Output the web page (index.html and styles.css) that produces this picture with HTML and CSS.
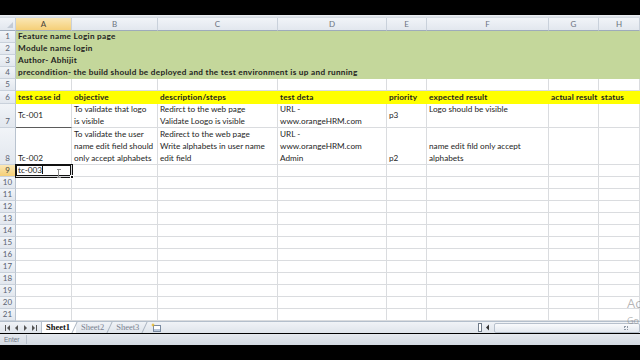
FILE: index.html
```html
<!DOCTYPE html>
<html lang="en">
<head>
	<meta charset="UTF-8">
	<title>Test cases - Login page</title>
	<link rel="stylesheet" href="styles.css">
</head>
<body>
	<div class="screen">
		<div class="topbar"></div>
		<div class="strip"></div>
		<table class="sheet">
			<colgroup>
				<col class="c-hdr"><col class="c-a"><col class="c-b"><col class="c-c"><col class="c-d">
				<col class="c-e"><col class="c-f"><col class="c-g"><col class="c-h">
			</colgroup>
			<tr class="colhdr">
				<th class="corner"><span class="tri"></span></th>
				<th class="active">A</th><th>B</th><th>C</th><th>D</th><th>E</th><th>F</th><th>G</th><th>H</th>
			</tr>
			<tr class="green">
				<th>1</th>
				<td colspan="8" class="b">Feature name Login page</td>
			</tr>
			<tr class="green">
				<th>2</th>
				<td colspan="8" class="b">Module name login</td>
			</tr>
			<tr class="green">
				<th>3</th>
				<td colspan="8" class="b">Author- Abhijit</td>
			</tr>
			<tr class="green">
				<th>4</th>
				<td colspan="8" class="b">precondition- the build should be deployed and the test environment is up and running</td>
			</tr>
			<tr>
				<th>5</th>
				<td></td><td></td><td></td><td></td><td></td><td></td><td></td><td></td>
			</tr>
			<tr class="yellow h13">
				<th>6</th>
				<td class="b">test case id</td>
				<td class="b">objective</td>
				<td class="b">description/steps</td>
				<td class="b">test deta</td>
				<td class="b">priority</td>
				<td class="b">expected result</td>
				<td class="b">actual result</td>
				<td class="b">status</td>
			</tr>
			<tr class="h24 wrap2">
				<th>7</th>
				<td class="mid underline">Tc-001</td>
				<td>To validate that logo<br>is visible</td>
				<td>Redirct to the web page<br>Validate Loogo is visible</td>
				<td>URL -<br>www.orangeHRM.com</td>
				<td class="mid">p3</td>
				<td class="top">Logo should be visible</td>
				<td></td><td></td>
			</tr>
			<tr class="h37 wrap3">
				<th>8</th>
				<td>Tc-002</td>
				<td>To validate the user<br>name edit field should<br>only accept alphabets</td>
				<td>Redirect to the web page<br>Write alphabets in user name<br>edit field</td>
				<td>URL -<br>www.orangeHRM.com<br>Admin</td>
				<td>p2</td>
				<td>name edit fild only accept<br>alphabets</td>
				<td></td><td></td>
			</tr>
			<tr>
				<th class="active">9</th>
				<td class="sel">tc-003<span class="caret"></span><span class="ibeam"></span><span class="handle"></span></td>
				<td></td><td></td><td></td><td></td><td></td><td></td><td></td>
			</tr>
			<tr><th>10</th><td></td><td></td><td></td><td></td><td></td><td></td><td></td><td></td></tr>
			<tr><th>11</th><td></td><td></td><td></td><td></td><td></td><td></td><td></td><td></td></tr>
			<tr><th>12</th><td></td><td></td><td></td><td></td><td></td><td></td><td></td><td></td></tr>
			<tr><th>13</th><td></td><td></td><td></td><td></td><td></td><td></td><td></td><td></td></tr>
			<tr><th>14</th><td></td><td></td><td></td><td></td><td></td><td></td><td></td><td></td></tr>
			<tr><th>15</th><td></td><td></td><td></td><td></td><td></td><td></td><td></td><td></td></tr>
			<tr><th>16</th><td></td><td></td><td></td><td></td><td></td><td></td><td></td><td></td></tr>
			<tr><th>17</th><td></td><td></td><td></td><td></td><td></td><td></td><td></td><td></td></tr>
			<tr><th>18</th><td></td><td></td><td></td><td></td><td></td><td></td><td></td><td></td></tr>
			<tr><th>19</th><td></td><td></td><td></td><td></td><td></td><td></td><td></td><td></td></tr>
			<tr><th>20</th><td></td><td></td><td></td><td></td><td></td><td></td><td></td><td></td></tr>
			<tr><th>21</th><td></td><td></td><td></td><td></td><td></td><td></td><td></td><td></td></tr>
		</table>
		<div class="tabbar">
			<div class="nav">
				<svg width="36" height="8" viewBox="0 0 36 8">
					<rect x="3" y="1" width="1" height="6" fill="#555"/>
					<polygon points="8,1 5,4 8,7" fill="#555"/>
					<polygon points="16,1 13,4 16,7" fill="#555"/>
					<polygon points="22,1 25,4 22,7" fill="#555"/>
					<polygon points="30,1 33,4 30,7" fill="#555"/>
					<rect x="34" y="1" width="1" height="6" fill="#555"/>
				</svg>
			</div>
			<div class="tabs">
				<span class="tab on">Sheet1</span>
				<span class="tab">Sheet2</span>
				<span class="tab">Sheet3</span>
				<span class="newsheet">
					<svg width="10" height="9" viewBox="0 0 10 9">
						<rect x="2.5" y="2.5" width="7" height="6" fill="#fff" stroke="#7a8aa0"/>
						<rect x="3" y="6" width="6" height="2" fill="#b9c7da"/>
						<path d="M2 0 L2.7 1.5 L4 2 L2.7 2.5 L2 4 L1.3 2.5 L0 2 L1.3 1.5 Z" fill="#e8b520"/>
					</svg>
				</span>
			</div>
			<div class="hscroll">
				<span class="split"></span>
				<span class="arrow">
					<svg width="6" height="7" viewBox="0 0 6 7"><polygon points="4,0.5 1,3.5 4,6.5" fill="#333"/></svg>
				</span>
				<span class="thumb"><span class="grip"></span></span>
			</div>
		</div>
		<div class="status">
			<span class="mode">Enter</span>
		</div>
		<div class="watermark">
			<span class="wm1">Activate Windows</span>
			<span class="wm2">Go to Settings to activate Windows.</span>
		</div>
	</div>
</body>
</html>
```

FILE: styles.css
```css
*{
	margin: 0;
	padding: 0;
	box-sizing: border-box;
}
html,body{ height: 100%; }
body{
	background: #000;
	font-family: Lato, "Liberation Sans", sans-serif;
}
.screen{
	width: 640px;
	height: 360px;
	background: #000;
	position: relative;
	overflow: hidden;
	display: flex;
	flex-direction: column;
}
.topbar{
	height: 15px;
	flex: none;
}
.strip{
	height: 3px;
	flex: none;
	background: linear-gradient(#eef1f5, #cfd6df);
}

/* ---------- grid ---------- */
.sheet{
	flex: none;
	width: 640px;
	table-layout: fixed;
	border-collapse: separate;
	border-spacing: 0;
	background: #fff;
	font-size: 8.2px;
	color: #1e1e1e;
}
.c-hdr{ width: 16px; }
.c-a{ width: 56px; }
.c-b{ width: 86px; }
.c-c{ width: 120px; }
.c-d{ width: 109px; }
.c-e{ width: 40px; }
.c-f{ width: 122px; }
.c-g{ width: 50px; }
.c-h{ width: 41px; }

.sheet tr{ height: 12px; }
.sheet tr.h13{ height: 13px; }
.sheet tr.h24{ height: 24px; }
.sheet tr.h37{ height: 37px; }

.sheet th{
	font-weight: normal;
	font-size: 8px;
	color: #5a6270;
	text-align: center;
	background: linear-gradient(#f1f4f8, #e2e7ee);
	border-right: 1px solid #b9c3cf;
	border-bottom: 1px solid #c9d1db;
	line-height: 11px;
	vertical-align: bottom;
	overflow: hidden;
}
.colhdr th{
	height: 13px;
	vertical-align: middle;
	border-bottom: 1px solid #9eabbb;
	border-right: 1px solid #c9d1db;
	color: #6b7380;
}
.sheet th.active{
	background: linear-gradient(#fae7b5, #f5cf77);
	color: #46433a;
}
.corner{
	position: relative;
}
.corner .tri{
	position: absolute;
	right: 2px;
	bottom: 2px;
	width: 0;
	height: 0;
	border-left: 6px solid transparent;
	border-bottom: 6px solid #c3cbd6;
}

.sheet td{
	border-right: 1px solid #dadcdf;
	border-bottom: 1px solid #dadcdf;
	padding: 0 0 0 2px;
	line-height: 11px;
	white-space: nowrap;
	overflow: hidden;
	vertical-align: bottom;
}
.wrap2 td{ line-height: 11.5px; }
.wrap3 td{ line-height: 12px; }
.sheet td.b{
	font-weight: bold;
	letter-spacing: 0.3px;
}
.yellow td.b{ letter-spacing: 0.15px; }
.sheet td.mid{ vertical-align: middle; }
.sheet td.top{ vertical-align: top; }
.sheet td.underline{ border-bottom-color: #5b5b5b; }

.green td{
	background: #c4d79b;
	border-color: #c4d79b;
}
.green td.b{ overflow: visible; }
.yellow td{
	background: #ffff00;
	border-color: #ffff00;
}

.sheet td.sel{
	position: relative;
	overflow: visible;
	box-shadow: inset 0 0 0 1px #111;
	outline: 1px solid #111;
	outline-offset: 0;
}
.caret{
	display: inline-block;
	width: 1px;
	height: 9px;
	background: #111;
	vertical-align: -1px;
}
.handle{
	position: absolute;
	right: -3px;
	bottom: -3px;
	width: 4px;
	height: 4px;
	background: #111;
	border: 1px solid #fff;
}
.ibeam{
	position: absolute;
	left: 41px;
	top: 4px;
	width: 4px;
	height: 9px;
	border-top: 1px solid #8a8a8a;
	border-bottom: 1px solid #8a8a8a;
}
.ibeam::after{
	content: "";
	position: absolute;
	left: 1px;
	top: 0;
	width: 1px;
	height: 7px;
	background: #8a8a8a;
}

/* ---------- sheet tabs + scroll ---------- */
.tabbar{
	flex: none;
	height: 12px;
	display: flex;
	align-items: stretch;
	background: linear-gradient(#f0f3f7, #dfe4eb);
	border-top: 1px solid #b4bfcc;
}
.nav{
	width: 40px;
	display: flex;
	align-items: center;
	padding-left: 2px;
}
.tabs{
	width: 438px;
	display: flex;
	align-items: stretch;
	font-family: "Liberation Serif", serif;
	font-size: 8.5px;
	color: #7a8290;
}
.tab{
	padding: 0 7px 0 5px;
	line-height: 11px;
	position: relative;
}
.tab::after{
	content: "";
	position: absolute;
	right: 1px;
	top: 0;
	width: 1px;
	height: 11px;
	background: #a9b3c0;
	transform: skewX(-25deg);
}
.tab.on{
	background: #fff;
	color: #111;
	font-weight: bold;
	margin-left: 1px;
	padding: 0 6px 0 4px;
	border-left: 1px solid #b7c0cc;
}
.newsheet{
	display: flex;
	align-items: center;
	padding-left: 5px;
}
.hscroll{
	flex: 1;
	display: flex;
	align-items: center;
	gap: 2px;
}
.split{
	width: 4px;
	height: 9px;
	border: 1px solid #6f7a88;
	background: #fff;
}
.arrow{
	width: 8px;
	height: 11px;
	display: flex;
	align-items: center;
	justify-content: center;
}
.thumb{
	flex: 1;
	height: 10px;
	border: 1px solid #b7c0cc;
	border-radius: 2px;
	background: linear-gradient(#f9fafc, #e3e8ef);
	position: relative;
}
.grip{
	position: absolute;
	right: 11px;
	top: 2px;
	width: 4px;
	height: 4px;
	border: 1px dotted #8e98a5;
}

/* ---------- status bar ---------- */
.status{
	flex: none;
	height: 11px;
	margin-top: 1px;
	background: linear-gradient(#e4e8ee, #d3d9e1);
	display: flex;
	align-items: center;
	font-family: "Liberation Sans", sans-serif;
	font-size: 6.5px;
	color: #6d7583;
}
.mode{
	padding: 0 6px 0 4px;
	border-right: 1px solid #b9c1cc;
	line-height: 9px;
}

/* windows activation watermark, overlapping the grid */
.watermark{
	position: absolute;
	left: 627px;
	top: 295px;
	color: rgba(120,120,120,0.55);
	font-family: "Open Sans", sans-serif;
	white-space: nowrap;
	pointer-events: none;
}
.wm1{
	display: block;
	font-size: 13px;
	line-height: 16px;
}
.wm2{
	display: block;
	font-size: 9px;
	line-height: 12px;
	margin-top: 4px;
}
```
